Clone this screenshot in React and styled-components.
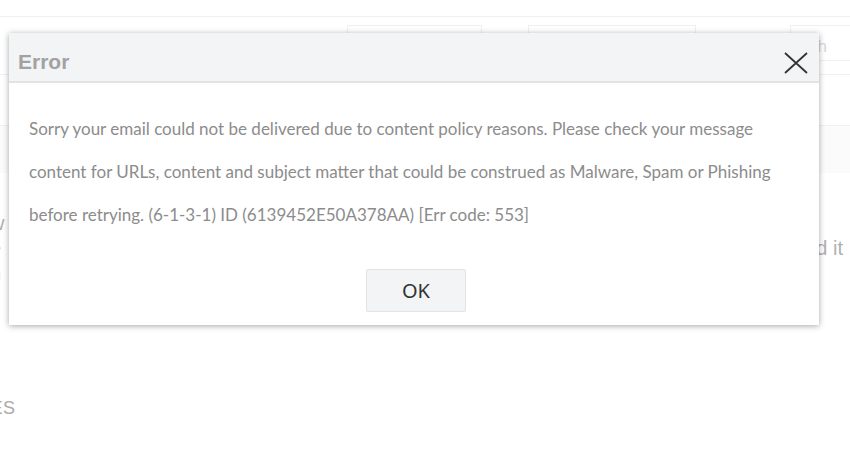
import React from 'react';
import styled, { createGlobalStyle } from 'styled-components';

const GlobalStyle = createGlobalStyle`
  html, body {
    margin: 0;
    padding: 0;
    background: #fff;
    font-family: "Liberation Sans", Arial, sans-serif;
  }
  * { box-sizing: border-box; }
`;

// Page behind the dialog
const Page = styled.div`
  position: relative;
  width: 850px;
  height: 461px;
  overflow: hidden;
  background: #fff;
`;

const TopBar = styled.div`
  height: 17px;
  border-bottom: 1px solid #f0f0f0;
`;

const Toolbar = styled.div`
  display: flex;
  align-items: flex-start;
  height: 58px;
  padding-top: 8px;
  border-bottom: 1px solid #f0f0f0;
`;

const Field = styled.div`
  margin-left: ${p => p.$left}px;
  width: ${p => p.$width}px;
  height: 36px;
  border: 1px solid #f0f0f0;
  color: #d8d8d8;
  font-size: 17px;
  padding: 11px 0;
  text-indent: -18px;
  flex-shrink: 0;
  white-space: nowrap;
`;

const Band = styled.div`
  height: 48px;
  margin-top: 50px;
  background: #fbfbfb;
  border-top: 1px solid #f0f0f0;
`;

const Para = styled.p`
  margin: 38px 0 0 -10px;
  width: 853px;
  font-size: 20px;
  line-height: 25px;
  color: #b0b0b0;
`;

const ParaLine = styled.span`
  display: flex;
  justify-content: space-between;
`;

const SectionTitle = styled.div`
  margin: 112px 0 0 -47px;
  font-size: 18px;
  color: #aaa;
  letter-spacing: 0.5px;
`;

// Dialog
const Dialog = styled.div`
  position: absolute;
  left: 9px;
  top: 33px;
  width: 810px;
  height: 292px;
  background: #fff;
  box-shadow: 0 1px 6px rgba(0, 0, 0, 0.35);
  display: flex;
  flex-direction: column;
`;

const DialogHeader = styled.div`
  height: 50px;
  display: flex;
  align-items: center;
  justify-content: space-between;
  padding: 0 10px 0 9px;
  background: #f3f4f6;
  border-bottom: 2px solid #e2e3e5;
`;

const DialogTitle = styled.h2`
  margin: 0;
  padding-top: 9px;
  font-family: "Liberation Sans", Arial, sans-serif;
  font-size: 21px;
  font-weight: bold;
  color: #a2a2a2;
`;

const CloseButton = styled.button`
  border: 0;
  background: none;
  padding: 0;
  width: 26px;
  height: 26px;
  display: flex;
  align-items: center;
  justify-content: center;
  cursor: pointer;
  margin-top: 12px;
`;

const Message = styled.p`
  margin: 0;
  padding: 24px 20px 0 20px;
  font-family: Lato, "Noto Sans", sans-serif;
  font-size: 17px;
  line-height: 43px;
  color: #8c8c8c;
`;

const Actions = styled.div`
  display: flex;
  justify-content: center;
  padding-top: 33px;
  padding-left: 4px;
`;

const OkButton = styled.button`
  width: 100px;
  height: 43px;
  background: #f3f4f6;
  border: 1px solid #e2e3e5;
  border-radius: 2px;
  font-family: "Noto Sans", Lato, sans-serif;
  font-size: 20px;
  color: #333;
  cursor: pointer;
`;

const App = () => {
  return (
    <>
      <GlobalStyle />
      <Page>
        <TopBar />
        <Toolbar>
          <Field $left={347} $width={135} />
          <Field $left={46} $width={168} />
          <Field $left={94} $width={80}>Search</Field>
        </Toolbar>
        <Band />
        <Para>
          <ParaLine><span>w</span><span /></ParaLine>
          <ParaLine><span>e</span><span>and it</span></ParaLine>
          <ParaLine><span>n</span><span /></ParaLine>
        </Para>
        <SectionTitle>RULES</SectionTitle>

        <Dialog role="dialog" aria-labelledby="dlg-title">
          <DialogHeader>
            <DialogTitle id="dlg-title">Error</DialogTitle>
            <CloseButton aria-label="Close">
              <svg width="24" height="22" viewBox="0 0 24 22">
                <path d="M1 1 L23 21 M23 1 L1 21" stroke="#333" strokeWidth="1.8" fill="none" />
              </svg>
            </CloseButton>
          </DialogHeader>
          <Message>
            Sorry your email could not be delivered due to content policy reasons. Please check your message
            content for URLs, content and subject matter that could be construed as Malware, Spam or Phishing
            before retrying. (6-1-3-1) ID (6139452E50A378AA) [Err code: 553]
          </Message>
          <Actions>
            <OkButton>OK</OkButton>
          </Actions>
        </Dialog>
      </Page>
    </>
  );
};

export default App;
